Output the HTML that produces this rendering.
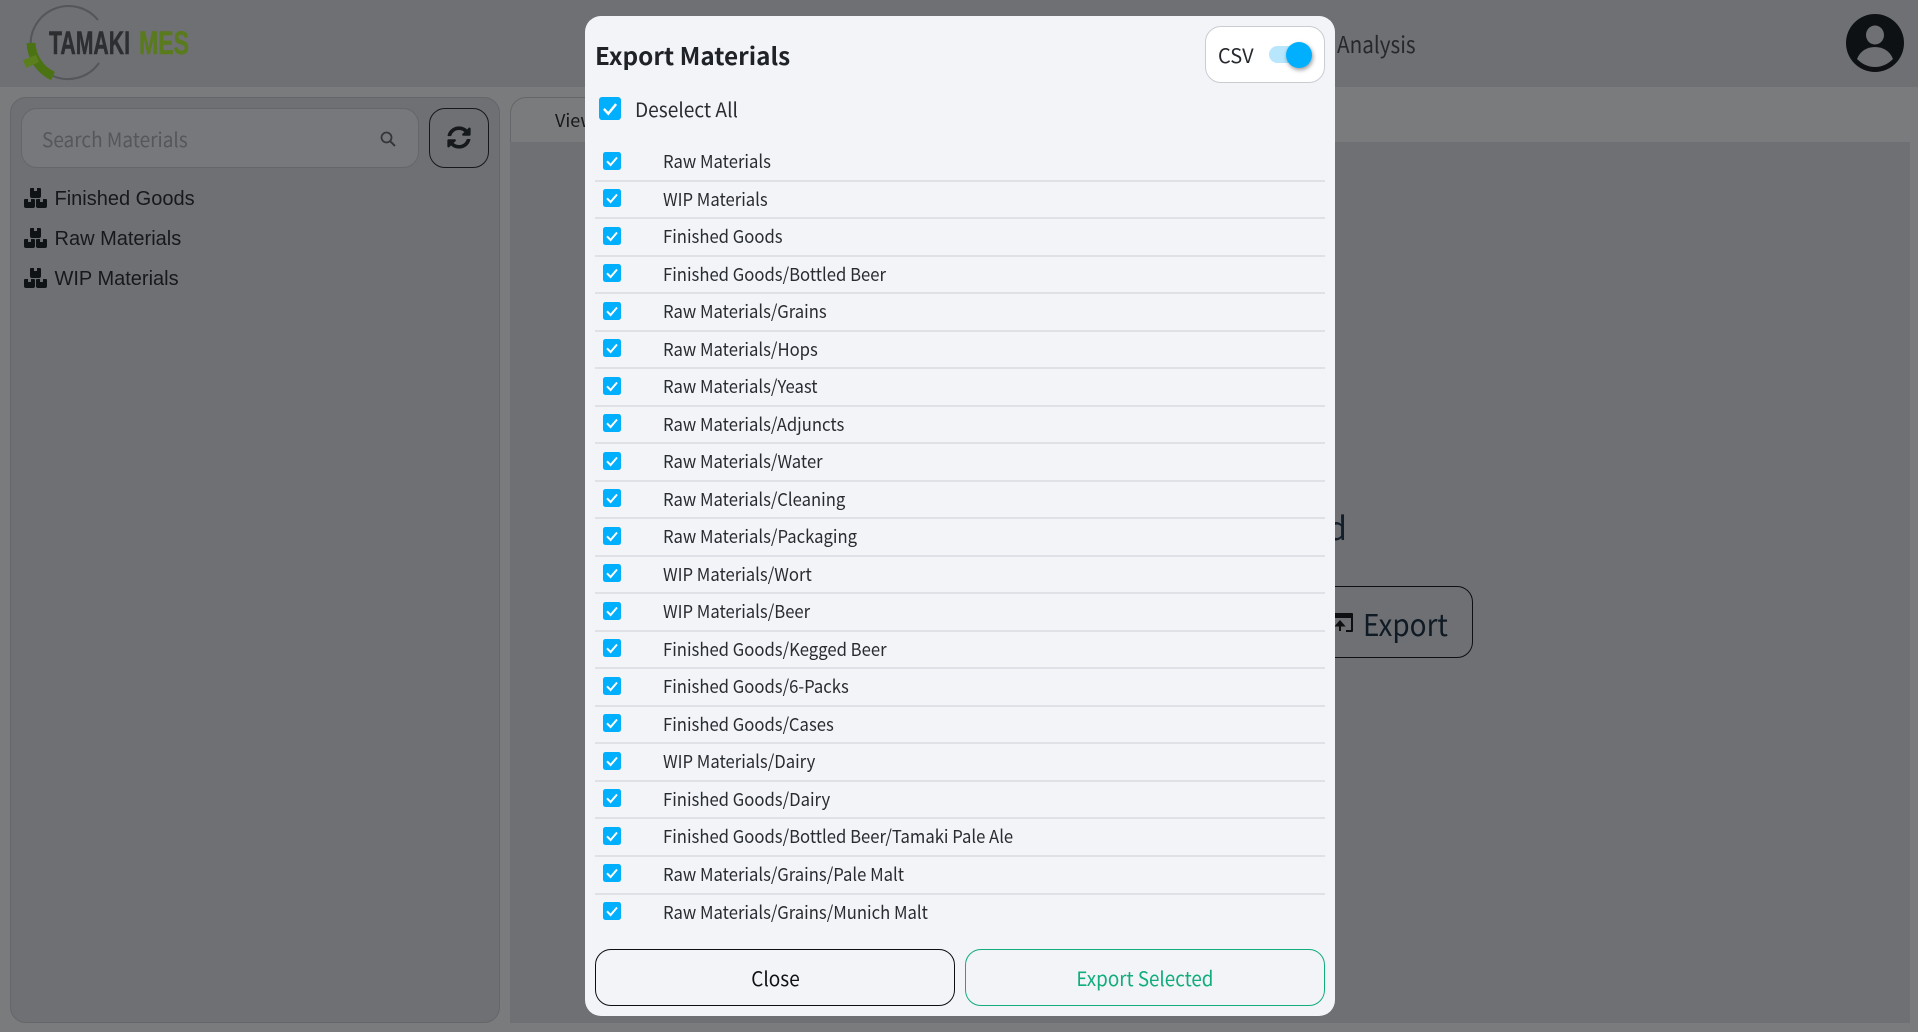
<!DOCTYPE html>
<html lang="en">
<head>
<meta charset="utf-8">
<title>Tamaki MES - Export Materials</title>
<style>
*{box-sizing:border-box;margin:0;padding:0}
html,body{width:1918px;height:1032px;overflow:hidden;background:#7a7b7c}
body{position:relative;font-family:"Liberation Sans",sans-serif;color:#15181b}
.seg{font-family:"Noto Sans CJK JP","Liberation Sans",sans-serif}
.abs{position:absolute}
.sx{transform-origin:left center}
#nav{left:0;top:0;width:1918px;height:87px;background:#6f7074}
#side{left:10px;top:97px;width:490px;height:926px;background:#6f7074;border:1px solid #65666a;border-radius:16px}
#search{left:21px;top:108px;width:398px;height:60px;background:#77787b;border:1px solid #65666a;border-radius:16px}
#ph{left:42px;top:123.5px;font-size:20px;line-height:30px;color:#54575b;white-space:nowrap;transform:scaleX(.95)}
#refresh{left:429px;top:108px;width:60px;height:60px;border:1px solid #16181b;border-radius:16px}
.item{left:54.5px;font-size:20px;line-height:24px;color:#16191c;white-space:nowrap}
#main{left:510px;top:97px;width:80px;height:45px;background:#7a7b7c;border-left:1px solid #65666a;border-top:1px solid #65666a;border-top-left-radius:16px}
#panel{left:510px;top:142px;width:1400px;height:881px;background:#6f7074}
#modal{left:585px;top:16px;width:750px;height:1000px;background:#f2f4f8;border-radius:16px}
#rows{left:595px;top:144.2px;width:730px}
.r{position:relative;height:37.52px;border-bottom:2px solid #e0e1e6}
.r:last-child{border-bottom:0}
.r svg{position:absolute;left:8px;top:7.5px}
.r span{position:absolute;left:67.6px;top:2px;font-size:18px;line-height:30px;color:#282c31;white-space:nowrap;transform:scaleX(.926);transform-origin:left center}
.btn{top:949px;width:360px;height:57px;border-radius:16px;border:1px solid;background:#f2f4f8;text-align:center;font-size:20px;line-height:55px}
.btn span{display:inline-block}
</style>
</head>
<body>
<div class="abs" id="nav"></div>
<svg class="abs" style="left:0;top:0" width="200" height="87" viewBox="0 0 200 87">
  <path d="M98 20A38 38 0 0 0 30.6 43" fill="none" stroke="#55565a" stroke-width="2"/>
  <path d="M53 76A38 38 0 0 0 99 63" fill="none" stroke="#55565a" stroke-width="2"/>
  <path d="M31 43A38 38 0 0 0 53 76" fill="none" stroke="#4c7313" stroke-width="9"/>
  <path d="M23 60L36 55L39 62L26 68Z" fill="#5b7f1d"/>
  <text x="49" y="54" font-family="Liberation Sans" font-weight="700" font-size="32" fill="#2d2e30" stroke="#2d2e30" stroke-width=".5" textLength="81" lengthAdjust="spacingAndGlyphs">TAMAKI</text>
  <text x="139" y="54" font-family="Liberation Sans" font-weight="700" font-size="32" fill="#5a7a1e" stroke="#5a7a1e" stroke-width=".5" textLength="50" lengthAdjust="spacingAndGlyphs">MES</text>
</svg>
<div class="abs seg sx" style="left:1337px;top:26px;font-size:23px;line-height:34px;color:#25282c;transform:scaleX(.9)">Analysis</div>
<svg class="abs" style="left:1846px;top:14px" width="58" height="58" viewBox="0 0 58 58">
  <circle cx="29" cy="29" r="29" fill="#0e1114"/>
  <ellipse cx="29" cy="21" rx="9" ry="9.5" fill="#6f7074"/>
  <path d="M11 45C14 37 21 33 29 33S44 37 47 45C42 50 36 53 29 53S16 50 11 45Z" fill="#6f7074"/>
</svg>

<div class="abs" id="side"></div>
<div class="abs" id="search"></div>
<div class="abs seg sx" id="ph">Search Materials</div>
<svg class="abs" style="left:380px;top:131px" width="16" height="16" viewBox="0 0 16 16"><circle cx="6.5" cy="6.5" r="5" fill="none" stroke="#33363a" stroke-width="1.8"/><path d="M10.2 10.2L15 15" stroke="#33363a" stroke-width="2"/></svg>
<div class="abs" id="refresh"></div>
<svg class="abs" style="left:447px;top:126px" width="24" height="23" viewBox="0 0 512 512" preserveAspectRatio="none"><path fill="#16191c" d="M370.72 133.28C339.458 104.008 298.888 87.962 255.848 88c-77.458.068-144.328 53.178-162.791 126.85-1.344 5.363-6.122 9.15-11.651 9.15H24.103c-7.498 0-13.194-6.807-11.807-14.176C33.933 94.924 134.813 8 256 8c66.448 0 126.791 26.136 171.315 68.685L463.03 40.97C478.149 25.851 504 36.559 504 57.941V192c0 13.255-10.745 24-24 24H345.941c-21.382 0-32.09-25.851-16.971-40.971l41.75-41.749zM32 296h134.059c21.382 0 32.09 25.851 16.971 40.971l-41.75 41.75c31.262 29.273 71.835 45.319 114.876 45.28 77.418-.07 144.315-53.144 162.787-126.849 1.344-5.363 6.122-9.15 11.651-9.15h57.304c7.498 0 13.194 6.807 11.807 14.176C478.067 417.076 377.187 504 256 504c-66.448 0-126.791-26.136-171.315-68.685L48.97 471.03C33.851 486.149 8 475.441 8 454.059V320c0-13.255 10.745-24 24-24z"/></svg>

<svg width="0" height="0" style="position:absolute"><defs>
  <g id="boxes" fill="#101316">
    <path d="M6 1a1 1 0 0 1 1-1h3v3h3V0h3a1 1 0 0 1 1 1v7a2 2 0 0 1-2 2H8a2 2 0 0 1-2-2z"/>
    <path d="M0 12a1 1 0 0 1 1-1h3v3h3v-3h3a1 1 0 0 1 1 1v6a2 2 0 0 1-2 2H2a2 2 0 0 1-2-2z"/>
    <path d="M12 12a1 1 0 0 1 1-1h3v3h3v-3h3a1 1 0 0 1 1 1v6a2 2 0 0 1-2 2h-7a2 2 0 0 1-2-2z"/>
  </g>
  <g id="cb"><rect width="18" height="18" rx="2.5" fill="#00b0ff"/><path d="M4 9.3L7.6 13L14 5.5" fill="none" stroke="#fff" stroke-width="2"/></g>
</defs></svg>
<svg class="abs" style="left:24px;top:188px" width="23" height="20"><use href="#boxes"/></svg>
<svg class="abs" style="left:24px;top:228px" width="23" height="20"><use href="#boxes"/></svg>
<svg class="abs" style="left:24px;top:268px" width="23" height="20"><use href="#boxes"/></svg>
<div class="abs item" style="top:187px">Finished Goods</div>
<div class="abs item" style="top:227px">Raw Materials</div>
<div class="abs item" style="top:267px">WIP Materials</div>

<div class="abs" id="main"></div>
<div class="abs" id="panel"></div>
<div class="abs seg" style="left:555px;top:107px;font-size:18px;line-height:27px;color:#16191c">View</div>
<div class="abs seg" style="left:1200px;top:504px;width:147px;text-align:right;font-size:32px;line-height:46px;color:#13202c">d</div>
<div class="abs" style="left:1250px;top:586px;width:223px;height:72px;border:1.5px solid #0d0f11;border-radius:16px"></div>
<svg class="abs" style="left:1325px;top:611px" width="29" height="23" viewBox="0 0 29 23"><path d="M3 2h24a1 1 0 0 1 1 1v17a1 1 0 0 1-1 1h-6v-2h5V7H4v12h5v2H3a1 1 0 0 1-1-1V3a1 1 0 0 1 1-1z" fill="#0d0f11"/><path d="M15 20v-8M11.5 14.5L15 10.5l3.5 4z" stroke="#0d0f11" stroke-width="2" fill="#0d0f11"/></svg>
<div class="abs seg sx" style="left:1363px;top:600.5px;font-size:30px;line-height:44px;color:#0f1a24;transform:scaleX(.93)">Export</div>

<div class="abs" id="modal"></div>
<div class="abs seg sx" style="left:595px;top:37px;font-size:24px;line-height:36px;font-weight:700;color:#1f2327;transform:scaleX(1.012)">Export Materials</div>
<div class="abs" style="left:1205px;top:26px;width:120px;height:57px;background:#fff;border:1px solid #c9ccd1;border-radius:16px"></div>
<div class="abs seg" style="left:1218px;top:40px;font-size:20px;line-height:30px;color:#25292d">CSV</div>
<div class="abs" style="left:1269px;top:46px;width:36px;height:17px;background:#b8e6fd;border-radius:9px"></div>
<div class="abs" style="left:1286px;top:42px;width:26px;height:26px;background:#00b0ff;border-radius:50%;box-shadow:1px 2px 4px rgba(0,0,0,.4)"></div>
<svg class="abs" style="left:599px;top:97px" width="22" height="23" viewBox="0 0 18 18" preserveAspectRatio="none"><use href="#cb"/></svg>
<div class="abs seg sx" style="left:635px;top:94px;font-size:20px;line-height:30px;color:#2a2e33;transform:scaleX(.957)">Deselect All</div>

<div class="abs seg" id="rows">
<div class="r"><svg width="18" height="18"><use href="#cb"/></svg><span>Raw Materials</span></div>
<div class="r"><svg width="18" height="18"><use href="#cb"/></svg><span>WIP Materials</span></div>
<div class="r"><svg width="18" height="18"><use href="#cb"/></svg><span>Finished Goods</span></div>
<div class="r"><svg width="18" height="18"><use href="#cb"/></svg><span>Finished Goods/Bottled Beer</span></div>
<div class="r"><svg width="18" height="18"><use href="#cb"/></svg><span>Raw Materials/Grains</span></div>
<div class="r"><svg width="18" height="18"><use href="#cb"/></svg><span>Raw Materials/Hops</span></div>
<div class="r"><svg width="18" height="18"><use href="#cb"/></svg><span>Raw Materials/Yeast</span></div>
<div class="r"><svg width="18" height="18"><use href="#cb"/></svg><span>Raw Materials/Adjuncts</span></div>
<div class="r"><svg width="18" height="18"><use href="#cb"/></svg><span>Raw Materials/Water</span></div>
<div class="r"><svg width="18" height="18"><use href="#cb"/></svg><span>Raw Materials/Cleaning</span></div>
<div class="r"><svg width="18" height="18"><use href="#cb"/></svg><span>Raw Materials/Packaging</span></div>
<div class="r"><svg width="18" height="18"><use href="#cb"/></svg><span>WIP Materials/Wort</span></div>
<div class="r"><svg width="18" height="18"><use href="#cb"/></svg><span>WIP Materials/Beer</span></div>
<div class="r"><svg width="18" height="18"><use href="#cb"/></svg><span>Finished Goods/Kegged Beer</span></div>
<div class="r"><svg width="18" height="18"><use href="#cb"/></svg><span>Finished Goods/6-Packs</span></div>
<div class="r"><svg width="18" height="18"><use href="#cb"/></svg><span>Finished Goods/Cases</span></div>
<div class="r"><svg width="18" height="18"><use href="#cb"/></svg><span>WIP Materials/Dairy</span></div>
<div class="r"><svg width="18" height="18"><use href="#cb"/></svg><span>Finished Goods/Dairy</span></div>
<div class="r"><svg width="18" height="18"><use href="#cb"/></svg><span>Finished Goods/Bottled Beer/Tamaki Pale Ale</span></div>
<div class="r"><svg width="18" height="18"><use href="#cb"/></svg><span>Raw Materials/Grains/Pale Malt</span></div>
<div class="r"><svg width="18" height="18"><use href="#cb"/></svg><span>Raw Materials/Grains/Munich Malt</span></div>
</div>

<div class="abs btn seg" style="left:595px;border-color:#0c0e10;color:#0f1114"><span style="transform:scaleX(.95)">Close</span></div>
<div class="abs btn seg" style="left:965px;border-color:#12ad79;color:#12ad79"><span style="transform:scaleX(.94)">Export Selected</span></div>
</body>
</html>
